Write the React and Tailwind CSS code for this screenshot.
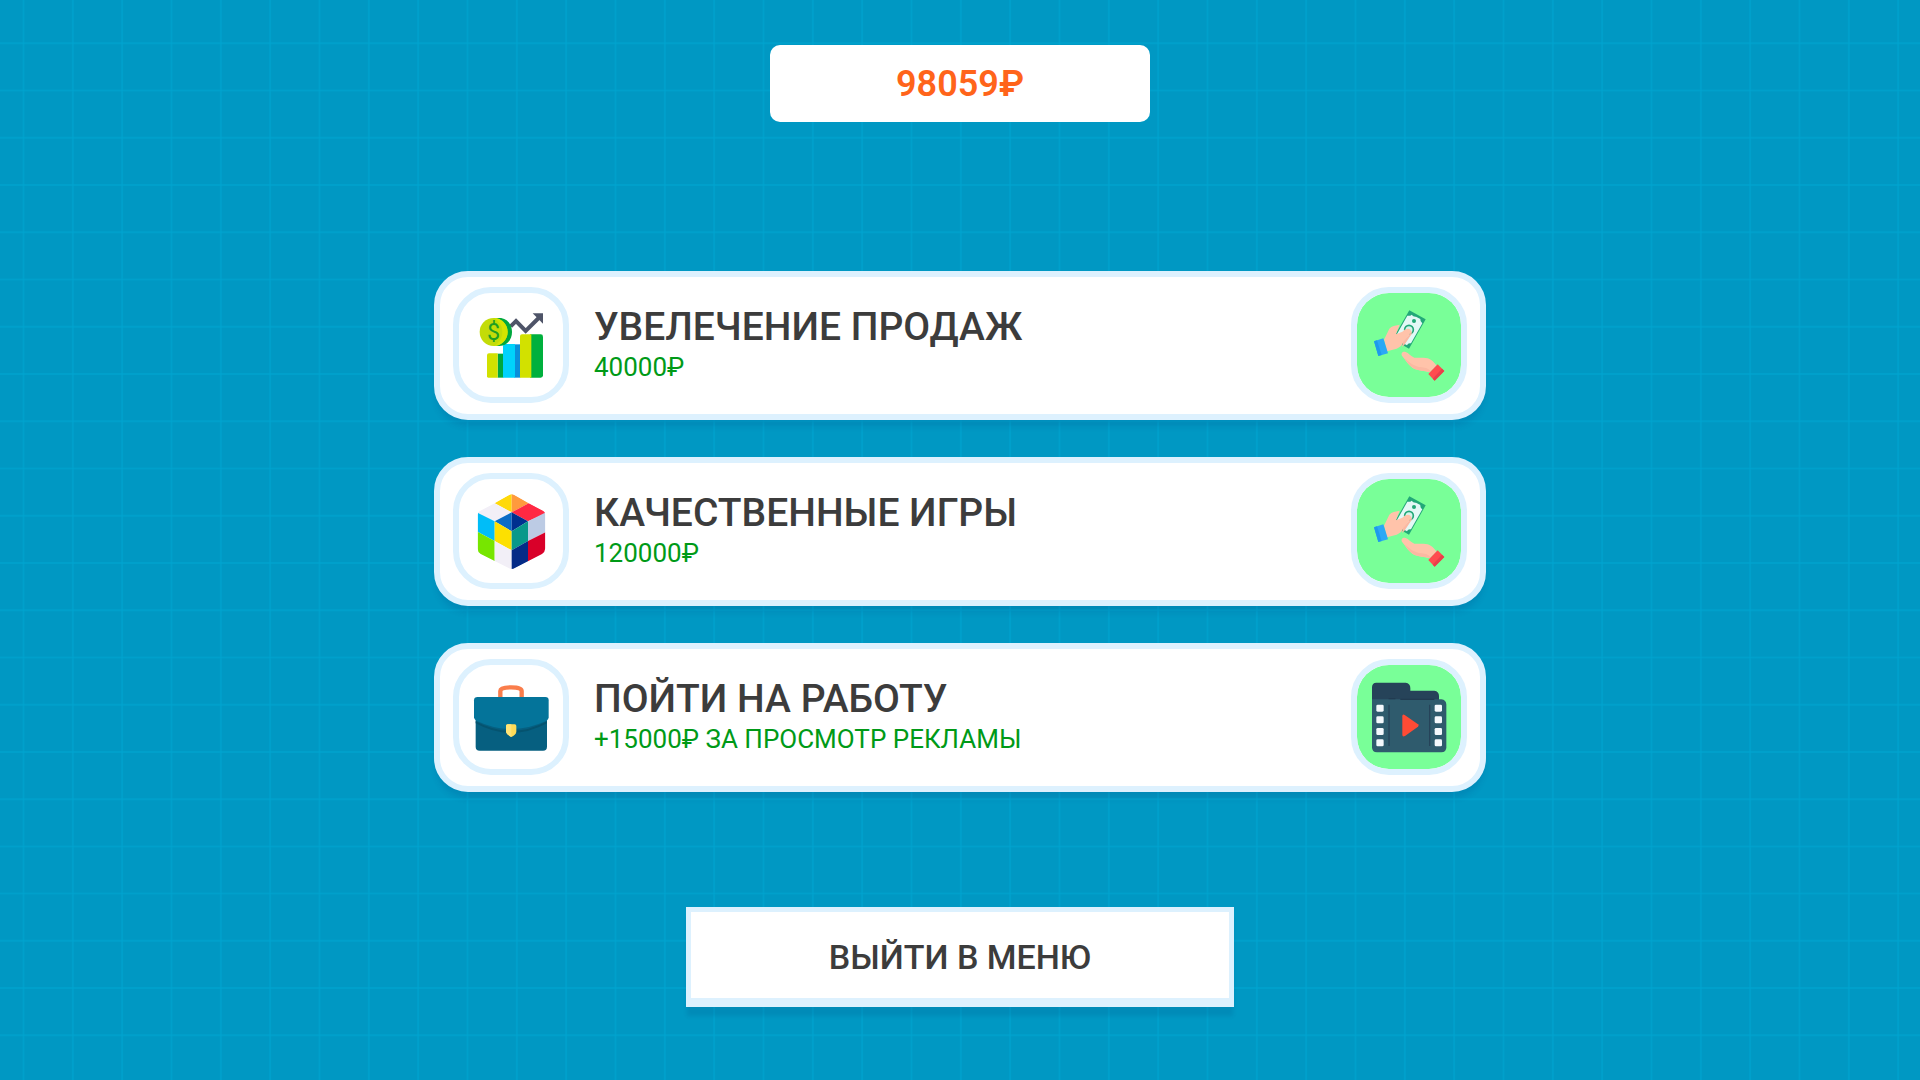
import { useState } from 'react';

const ROBOTO = { fontFamily: "Roboto, 'Liberation Sans', sans-serif" };

const GRID_COLUMNS = Array.from({ length: 39 }, (_, i) => 23.5 + (i * 148) / 3);
const GRID_ROWS = Array.from({ length: 22 }, (_, i) => 43.3 + i * 47.24);

const SalesIcon = () => (
  <svg viewBox="57 54 312 312" className="w-full h-full" aria-hidden="true">
    <path d="M212 154 L228 138 L257 168 L296 129" fill="none" stroke="#4E5468" strokeWidth="12" strokeLinejoin="miter" />
    <path d="M278 115 H309 V146 Z" fill="#4E5468" />
    <path d="M173 236 H190 V308 H173 Z" fill="#00A83E" />
    <path d="M147 235 H173 V308 H145 Q141 308 141 304 V241 Q141 235 147 235 Z" fill="#D2E100" />
    <path d="M223 208 H241 V308 H223 Z" fill="#0A8FDA" />
    <path d="M195 207 H225 V308 H189 V213 Q189 207 195 207 Z" fill="#00D2FB" />
    <path d="M270 178 H302 Q309 178 309 185 V301 Q309 308 302 308 H270 Z" fill="#00B03D" />
    <path d="M246 178 H274 V308 H240 V184 Q240 178 246 178 Z" fill="#D2E100" />
    <path d="M162 129 H178 C201 129 216 148 216 171 C216 194 201 213 178 213 H162 Z" fill="#00A83E" />
    <ellipse cx="161" cy="171" rx="42" ry="42" fill="#C3DC08" />
    <path d="M161 129 C184 129 203 148 203 171 C203 194 184 213 161 213 C178 204 187 189 187 171 C187 153 178 138 161 129 Z" fill="#D6E500" />
    <text x="161" y="195" textAnchor="middle" fontSize="70" fontWeight="400" fill="#1F9E22" style={ROBOTO}>$</text>
  </svg>
);

const CubeIcon = () => (
  <svg viewBox="57 56 312 312" className="w-full h-full" aria-hidden="true">
    <clipPath id="cube">
      <path d="M209 103 Q215 100 222 103 L308 150 Q316 155 316 163 V264 Q315 275 306 281 L226 322 Q215 330 206 323 L122 281 Q113 275 113 265 V163 Q113 154 121 150 Z" />
    </clipPath>
    <g clipPath="url(#cube)">
      <path d="M215 99 L164 129 L215 156 Z" fill="#FFD90A" />
      <path d="M215 99 L266 129 L215 156 Z" fill="#FF9A3D" />
      <path d="M164 129 L215 156 L164 183 L108 158 Z" fill="#F2EFF7" />
      <path d="M266 129 L322 158 L264 183 L215 156 Z" fill="#FF2943" />
      <path d="M215 156 V213 L164 183 Z" fill="#0A6CC6" />
      <path d="M215 156 L264 183 L215 213 Z" fill="#00308F" />
      <path d="M110 156 L164 183 V242 L110 213 Z" fill="#00BDF8" />
      <path d="M110 213 L164 242 V304 L110 276 Z" fill="#77E600" />
      <path d="M164 183 L215 213 V270 L164 242 Z" fill="#FDE000" />
      <path d="M164 242 L215 270 V330 L164 304 Z" fill="#F2EFF7" />
      <path d="M215 213 L264 183 V242 L215 270 Z" fill="#08988A" />
      <path d="M215 270 L264 242 V304 L215 330 Z" fill="#052B87" />
      <path d="M264 183 L320 155 V214 L264 242 Z" fill="#BCCBE4" />
      <path d="M264 242 L320 214 V276 L264 304 Z" fill="#D90029" />
    </g>
  </svg>
);

const BriefcaseIcon = () => (
  <svg viewBox="57 59 312 312" className="w-full h-full" aria-hidden="true">
    <path d="M181 158 V137 Q181 126 213 126 Q245 126 245 137 V158" fill="none" stroke="#FA7D4B" strokeWidth="13" />
    <path d="M107 220 H321 V304 Q321 316 309 316 H119 Q107 316 107 304 Z" fill="#065F80" />
    <path d="M107 228 Q213 286 321 228 V234 Q213 292 107 234 Z" fill="#05536F" />
    <path d="M113 155 H316 Q326 155 326 165 V216 Q326 222 320 226 Q213 276 109 226 Q102 222 102 216 V165 Q102 155 113 155 Z" fill="#04749A" />
    <path d="M203 237 H224 Q229 237 229 242 V260 Q227 269 214 275 Q200 269 198 260 V242 Q198 237 203 237 Z" fill="#FFDB58" />
    <path d="M203 237 H214 V275 Q200 269 198 260 V242 Q198 237 203 237 Z" fill="#FFE477" />
  </svg>
);

const PayIcon = () => (
  <svg viewBox="38 54 312 312" className="w-full h-full" aria-hidden="true">
    {/* Banknote */}
    <path d="M195 106 L244 133 L194 221 L145 193 Z" fill="#22A878" />
    <path d="M202 119 Q207 126 215 125 L228 132 Q227 140 234 145 L200 205 Q191 203 188 211 L158 195 Q162 186 156 181 L189 122 Q197 124 202 119 Z" fill="#E3F8F6" />
    <circle cx="209" cy="138" r="6" fill="#22A878" />
    <circle cx="194" cy="164" r="13" fill="#D5F3EC" stroke="#22A878" strokeWidth="5" />
    {/* Giving hand */}
    <path d="M119 194 L135 161 Q140 155 148 153 L166 149 L155 178 L174 170 Q184 159 195 162 Q204 168 196 177 L177 202 Q171 216 157 221 L128 229 Z" fill="#FFC3AA" />
    <path d="M176 201 L196 177 Q202 170 197 164 Q206 171 200 180 L184 204 Q180 212 173 216 Z" fill="#FBB8A2" />
    <path d="M89 199 L117 190 L131 235 L102 243 Z" fill="#2BA8F5" />
    <path d="M89 199 L98 196 L112 240 L102 243 Z" fill="#1E9AEB" />
    {/* Receiving hand */}
    <path d="M184 231 C193 234 199 244 210 248 L237 248 C257 248 266 257 277 272 L256 292 C239 286 225 288 211 282 C195 275 185 258 174 244 C168 235 175 227 184 231 Z" fill="#FFC3AA" />
    <path d="M180 250 C195 262 210 276 232 277 C244 278 252 281 259 289 L256 292 C239 286 225 288 211 282 C197 276 189 264 180 250 Z" fill="#FBB8A2" />
    <path d="M280 268 L300 288 L271 317 L252 297 Z" fill="#FF4B4F" />
    <path d="M293 281 L300 288 L271 317 L265 311 Z" fill="#E93F4B" />
  </svg>
);

const VideoIcon = () => (
  <svg viewBox="38 59 312 312" className="w-full h-full" aria-hidden="true">
    <path d="M96 112 H184 Q198 114 198 128 V136 H270 Q284 138 284 152 V200 H83 V126 Q83 112 96 112 Z" fill="#264359" />
    <path d="M83 162 H291 Q306 164 306 178 V306 Q306 321 291 321 H98 Q83 321 83 306 Z" fill="#2F5B6D" />
    <path d="M134 178 V302 M256 178 V302" stroke="#264359" strokeWidth="4" />
    <path d="M133 160 H153 M168 162 H270" stroke="#213B50" strokeWidth="4" />
    {[178, 213, 248, 282].map(y => (
      <g key={y} fill="#F4F8FC">
        <rect x="96" y={y} width="22" height="21" rx="4" />
        <rect x="271" y={y} width="22" height="21" rx="4" />
      </g>
    ))}
    <path d="M174 213 Q174 205 181 209 L221 237 Q225 241 221 244 L182 272 Q174 276 174 268 Z" fill="#FF4B35" />
  </svg>
);

const UPGRADES = [
  { id: 'sales', title: 'УВЕЛЕЧЕНИЕ ПРОДАЖ', note: '40000₽', icon: SalesIcon, action: PayIcon, label: 'Купить', cost: 40000 },
  { id: 'quality', title: 'КАЧЕСТВЕННЫЕ ИГРЫ', note: '120000₽', icon: CubeIcon, action: PayIcon, label: 'Купить', cost: 120000 },
  { id: 'work', title: 'ПОЙТИ НА РАБОТУ', note: '+15000₽ ЗА ПРОСМОТР РЕКЛАМЫ', icon: BriefcaseIcon, action: VideoIcon, label: 'Смотреть', cost: -15000 },
];

const Backdrop = () => (
  <svg
    viewBox="0 0 1920 1080"
    preserveAspectRatio="none"
    className="absolute inset-0 -z-10 w-full h-full"
    stroke="#00A5D0"
    strokeWidth="2"
    strokeOpacity="0.6"
    aria-hidden="true"
  >
    {GRID_COLUMNS.map(x => <line key={x} x1={x} x2={x} y1="0" y2="1080" />)}
    {GRID_ROWS.map(y => <line key={y} x1="0" x2="1920" y1={y} y2={y} />)}
  </svg>
);

const UpgradeCard = ({ upgrade, onUse }) => {
  const Icon = upgrade.icon;
  const Action = upgrade.action;
  return (
    <li className="flex items-center bg-white border-6 border-[#DDF1FE] rounded-[34px] px-[13px] pt-[10px] pb-[11px] shadow-[0_8px_6px_-2px_rgba(0,50,110,0.14)]">
      <div className="size-[116px] shrink-0 border-6 border-[#DDF1FE] rounded-[38px]">
        <Icon />
      </div>
      <div className="grow px-[25px]">
        <h2 className="text-[39px] leading-[45px] font-medium text-[#3C3C3C]">{upgrade.title}</h2>
        <p className="text-[26px] leading-[35px] text-[#009A17]">{upgrade.note}</p>
      </div>
      <button
        type="button"
        aria-label={upgrade.label}
        onClick={() => onUse(upgrade.cost)}
        className="size-[116px] shrink-0 bg-[#79FF98] bg-clip-padding border-6 border-[#DDF1FE] rounded-[38px] cursor-pointer"
      >
        <Action />
      </button>
    </li>
  );
};

export default function App() {
  const [balance, setBalance] = useState(98059);

  const handleUse = (cost) => {
    if (cost <= balance) setBalance(balance - cost);
  };

  return (
    <main
      className="relative isolate min-h-screen bg-[#0098C3] flex flex-col items-center px-4 pt-[45px] pb-12"
      style={ROBOTO}
    >
      <Backdrop />

      {/* Balance */}
      <div className="w-full max-w-[380px] bg-white rounded-[10px] pt-[17px] pb-[15px] text-center text-[36px] leading-[45px] font-semibold text-[#FF641A]">
        {balance}₽
      </div>

      {/* Upgrades */}
      <ul className="w-full max-w-[1052px] mt-[149px] flex flex-col gap-[37px]">
        {UPGRADES.map(upgrade => (
          <UpgradeCard key={upgrade.id} upgrade={upgrade} onUse={handleUse} />
        ))}
      </ul>

      <button
        type="button"
        className="w-full max-w-[548px] mt-[115px] bg-white border-[5px] border-b-[9px] border-[#DDF1FE] pt-[23px] pb-[19px] text-[34px] leading-[44px] font-medium text-[#3C3C3C] shadow-[0_10px_4px_-1px_rgba(0,50,110,0.12)] cursor-pointer"
      >
        ВЫЙТИ В МЕНЮ
      </button>
    </main>
  );
}
